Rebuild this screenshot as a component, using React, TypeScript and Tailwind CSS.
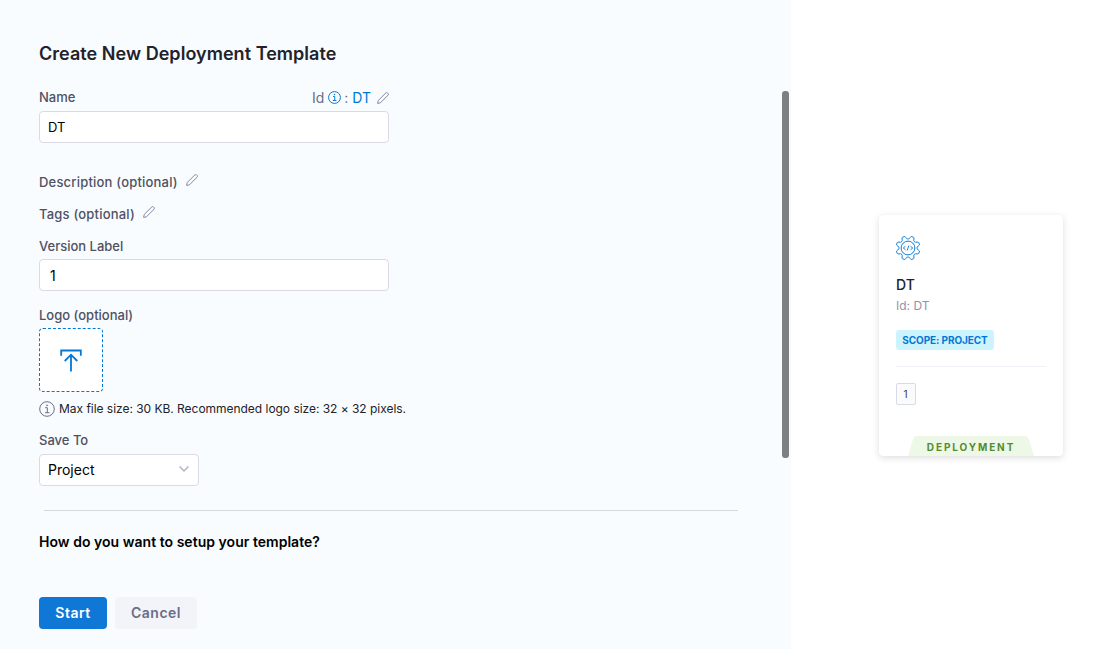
import React from 'react';

function Pencil({ className = '' }: { className?: string }) {
  return (
    <svg className={className} width="12" height="12" viewBox="0 0 12 12" fill="none" stroke="#7c7b96" strokeWidth="0.9" strokeLinejoin="round">
      <path d="M0.6 11.4 L1.2 8.5 L8.9 0.9 Q9.7 0.2 10.5 0.9 L11.1 1.5 Q11.8 2.3 11.1 3.1 L3.5 10.8 Z" />
    </svg>
  );
}

function Info({ size, color }: { size: number; color: string }) {
  return (
    <svg width={size} height={size} viewBox="0 0 16 16" fill="none" stroke={color} strokeWidth={size > 14 ? 1 : 1.2}>
      <circle cx="8" cy="8" r="7.3" />
      <path d="M6.2 6.7 H8.3 V11.6 M6 11.7 H10.4" />
      <circle cx="8" cy="4.3" r="0.85" fill={color} stroke="none" />
    </svg>
  );
}

const polar = (deg: number, r: number) => {
  const a = (deg * Math.PI) / 180;
  return `${(12 + r * Math.cos(a)).toFixed(2)} ${(12 + r * Math.sin(a)).toFixed(2)}`;
};

const gearPath =
  `M${polar(12, 10.8)}` +
  Array.from({ length: 8 }, (_, i) => {
    const a = 22.5 + 45 * i;
    return `Q${polar(a - 8.5, 12.2)} ${polar(a - 4, 12)}L${polar(a + 4, 12)}Q${polar(a + 8.5, 12.2)} ${polar(a + 10.5, 10.8)}C${polar(a + 13, 8.6)} ${polar(a + 32, 8.6)} ${polar(a + 34.5, 10.8)}`;
  }).join('') +
  'Z';

function Gear() {
  return (
    <svg className="overflow-visible" width="24" height="24" viewBox="0 0 24 24" fill="none" stroke="#0278d5" strokeWidth="0.95" strokeLinejoin="round">
      <path d={gearPath} />
      <circle cx="12" cy="12" r="6.9" />
      <path d="M9.5 10.2 L7.3 12 L9.5 13.8 M14.5 10.2 L16.7 12 L14.5 13.8 M12.8 9.6 L11.2 14.4" strokeWidth="0.9" />
    </svg>
  );
}

const label = 'flex h-5 items-center text-[13px] font-medium text-[#4f5162]';
const field = 'block h-8 w-[350px] rounded border border-[#d9dae5] bg-white text-black outline-none';

export default function App() {
  return (
    <div className="flex h-[649px] w-[1108px] overflow-hidden bg-white font-['Inter',sans-serif]">
      <main className="flex w-[791px] bg-[#f8fcff] pl-[39px]">
        <div className="w-[743px] pt-[42px]">
          <h1 className="h-6 text-[18px] leading-6 font-semibold tracking-[0.04px] text-[#22222a]">Create New Deployment Template</h1>

          <div className="mt-[22px] flex h-5 w-[350px] items-center justify-between">
            <label className={label}>Name</label>
            <div className="flex items-center text-[14px] text-[#6b6d85]">
              <span className="mr-1 pb-0.5">Id</span>
              <span className="pb-0.5">
                <Info size={13} color="#0278d5" />
              </span>
              <span className="ml-[3px] pb-0.5">:</span>
              <span className="ml-1 pb-0.5 text-[#0278d5]">DT</span>
              <Pencil className="ml-1.5" />
            </div>
          </div>
          <input className={`${field} mt-[3px] px-2 text-[13px]`} defaultValue="DT" />

          <div className={`${label} mt-[30px] tracking-[0.2px]`}>
            Description (optional)
            <Pencil className="mb-1.5 ml-2" />
          </div>
          <div className={`${label} mt-3 tracking-[0.2px]`}>
            Tags (optional)
            <Pencil className="mb-1.5 ml-2" />
          </div>

          <label className={`${label} mt-3`}>Version Label</label>
          <input className={`${field} mt-[2px] px-[10px] text-[14px]`} defaultValue="1" />

          <div className={`${label} mt-[15px]`}>Logo (optional)</div>
          <button className="mt-[2px] flex h-16 w-16 items-center justify-center rounded border border-dashed border-[#0278d5] bg-white">
            <svg width="22" height="24" viewBox="0 0 22 24" fill="none" stroke="#0278d5" strokeWidth="1.8">
              <path d="M1.2 7.8 V2.5 H20.8 V7.8" />
              <path d="M11 23.5 V6.5 M4.7 13 L11 6.7 L17.3 13" />
            </svg>
          </button>
          <div className="mt-[7px] flex h-5 items-center gap-1 text-[12px] tracking-[-0.03px] text-[#22222a]">
            <Info size={16} color="#6b6d85" />
            <span>Max file size: 30 KB. Recommended logo size: 32 × 32 pixels.</span>
          </div>

          <label className={`${label} mt-3`}>Save To</label>
          <button className="mt-[3px] flex h-8 w-40 items-center justify-between rounded border border-[#d9dae5] bg-white pr-[9px] pl-2 text-[14px] text-black">
            <span className="pb-0.5">Project</span>
            <svg className="mb-0.5" width="10" height="6" viewBox="0 0 10 6" fill="none" stroke="#b0b1c4" strokeWidth="1.4">
              <path d="M0.6 0.6 L5 5 L9.4 0.6" />
            </svg>
          </button>

          <div className="mt-6 ml-[5px] h-px w-[694px] bg-[#d5d9de]" />
          <h2 className="mt-[21px] h-5 text-[14px] leading-5 font-semibold tracking-[0.03px] text-black">How do you want to setup your template?</h2>

          <div className="mt-[45px] flex gap-2 text-[14px] font-semibold tracking-[0.5px]">
            <button className="h-8 w-[68px] rounded bg-[#0f78d7] pb-0.5 text-white">Start</button>
            <button className="h-8 w-[82px] rounded bg-[#f3f3fa] pb-0.5 text-[#6b6d85]">Cancel</button>
          </div>
        </div>
        <div className="mt-[91px] h-[367px] w-[7px] rounded-[3px] bg-[#7d7f81]" />
      </main>

      <aside className="pt-[215px] pl-[88px]">
        <div className="flex h-[241px] w-[184px] flex-col overflow-hidden rounded bg-white px-[17px] pt-[21px] shadow-[0_0_1px_rgba(40,41,61,0.06),0_2px_7px_rgba(96,97,112,0.2)]">
          <Gear />
          <div className="mt-[15px] h-5 text-[14px] leading-5 font-medium text-[#22222a]">DT</div>
          <div className="mt-[3px] h-4 text-[12px] leading-4 text-[#9293ab]">Id: DT</div>
          <div className="mt-4 flex h-5 w-[98px] items-center justify-center rounded-[3px] bg-[#cdf4fe] text-[10px] font-bold tracking-[-0.1px] whitespace-nowrap text-[#0278d5]">SCOPE: PROJECT</div>
          <div className="mt-4 h-px w-[150px] bg-[#f0f0fa]" />
          <div className="mt-4 flex h-[22px] w-5 items-center justify-center rounded-[2px] border border-[#d9dae5] bg-[#fafbfc] pr-px text-[10px] text-[#383946]">1</div>
          <div className="mt-[31px] grid h-5 w-[126px] place-items-center self-center">
            <svg className="col-start-1 row-start-1" width="126" height="20" viewBox="0 0 126 20">
              <path d="M0 20 L4.8 4 Q6 0 10 0 H116 Q120 0 121.2 4 L126 20 Z" fill="#edf8e6" />
            </svg>
            <span className="col-start-1 row-start-1 mt-[3px] text-[10px] font-bold tracking-[1.9px] text-[#558b2f]">DEPLOYMENT</span>
          </div>
        </div>
      </aside>
    </div>
  );
}
